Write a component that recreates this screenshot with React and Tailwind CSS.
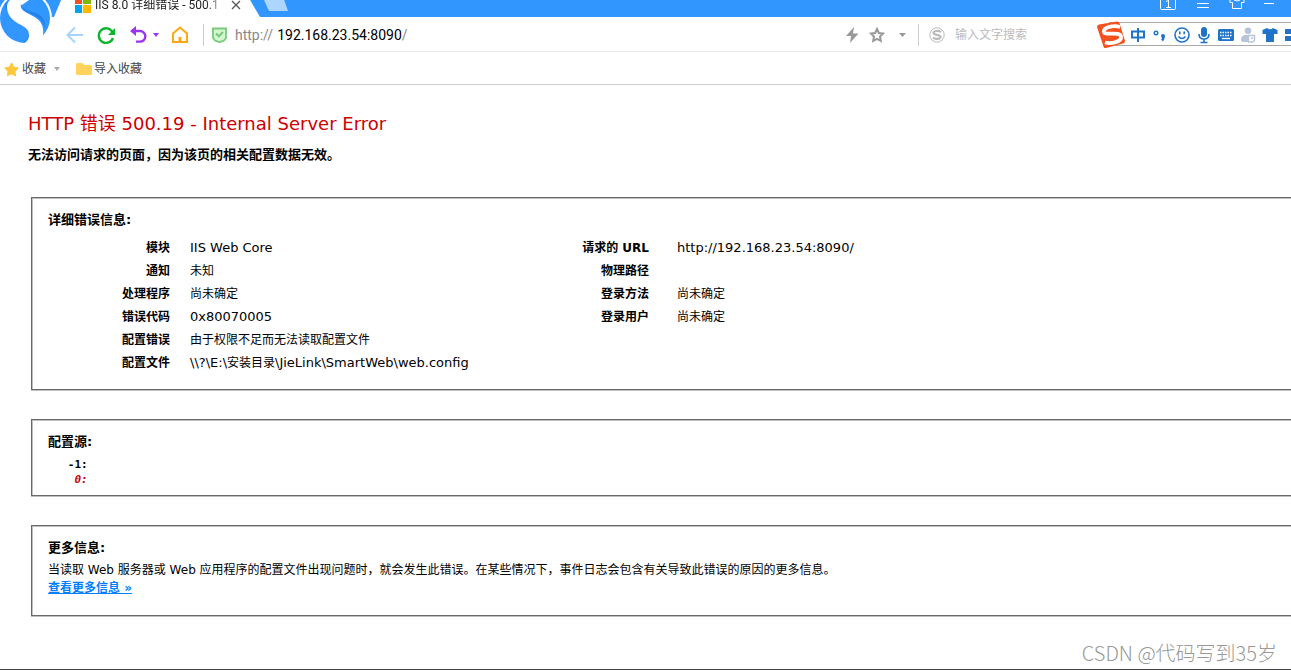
import { FaStar, FaFolder } from 'react-icons/fa'

const leftRows = [
  ['模块', 'IIS Web Core'],
  ['通知', <span className="text-xs">未知</span>],
  ['处理程序', <span className="text-xs">尚未确定</span>],
  ['错误代码', '0x80070005'],
  ['配置错误', <span className="text-xs">由于权限不足而无法读取配置文件</span>],
  ['配置文件', <>\\?\E:\<span className="text-xs">安装目录</span>\JieLink\SmartWeb\web.config</>],
]

const rightRows = [
  ['请求的 URL', 'http://192.168.23.54:8090/'],
  ['物理路径', ''],
  ['登录方法', <span className="text-xs">尚未确定</span>],
  ['登录用户', <span className="text-xs">尚未确定</span>],
]

function BrowserLogo() {
  return (
    <svg className="absolute left-0 top-0" width="54" height="46" viewBox="0 0 54 46" aria-hidden="true">
      <circle cx="25" cy="18" r="27" fill="#fff" />
      <circle cx="25" cy="18" r="25" fill="#3296ff" />
      <path d="M5 4C5 20 28 20 29 33c0 5-3 9-7 10 7-1 10-6 9-13C28 17 8 18 7 2Z" fill="#2283e8" />
      <path d="M22 7c4 9 20 6 23 21 1-13-8-15-17-17Z" fill="#2283e8" />
      <path
        d="M10 0H22C19 6 21 10 27 13c8 4 15 7 16 16 1 6-1 10-4 13l-5 4-12-2c4-1 7-4 7-9 0-6-4-8-10-11C12 20 7 15 7 7c0-3 1-5 3-7Z"
        fill="#fff"
      />
      <path d="M10 0h19l-7 5Z" fill="#fff" />
    </svg>
  )
}

function TabStrip() {
  return (
    <header className="flex h-[17px] items-end overflow-hidden bg-[#3296ff] pl-[54px] pr-3.5">
      <div className="flex h-6 w-[206px] shrink-0 items-center bg-white pl-[21px] text-xs text-[#222] [clip-path:polygon(10px_0,192px_0,206px_100%,0_100%)]">
        <svg width="16" height="16" viewBox="0 0 16 16" aria-hidden="true">
          <path d="M0 0h7v7H0z" fill="#f25022" />
          <path d="M8 0h8v7H8z" fill="#7fba00" />
          <path d="M0 8h7v8H0z" fill="#00a4ef" />
          <path d="M8 8h8v8H8z" fill="#ffb900" />
        </svg>
        <span className="ml-1 w-[132px] whitespace-nowrap font-['Roboto','Noto_Sans_CJK_SC',sans-serif] leading-4 [mask-image:linear-gradient(to_right,#000_84%,transparent)]">
          IIS 8.0 详细错误 - 500.1
        </span>
        <button type="button" aria-label="关闭标签" className="ml-1">
          <svg width="10" height="10" viewBox="0 0 10 10" stroke="#555" strokeWidth="1.3">
            <path d="M1 1l8 8M9 1L1 9" />
          </svg>
        </button>
      </div>
      <button type="button" aria-label="新标签" className="mb-1.5 h-5 w-7 bg-[#add6ff] [clip-path:polygon(0_0,21px_0,28px_100%,9px_100%)]" />
      <div className="ml-auto flex shrink-0 items-end gap-4 self-start text-white">
        <button type="button" aria-label="窗口数">
          <svg width="19" height="11" viewBox="0 0 19 11" fill="none" stroke="#fff">
            <path d="M1.5 0v8.500q0 1 1 1h13q1 0 1-1V0M9.500 0v7M7 7.500h5M7 1.500l2.500-1" />
          </svg>
        </button>
        <button type="button" aria-label="菜单">
          <svg width="19" height="11" viewBox="0 0 19 11" stroke="#fff">
            <path d="M3 3.500h12M3 7.500h12" />
          </svg>
        </button>
        <button type="button" aria-label="皮肤">
          <svg width="16" height="11" viewBox="0 0 16 11" fill="none" stroke="#fff">
            <path d="M1 0v2.500h2.500v6h9v-6H15V0M5 0q3 2 6 0" />
          </svg>
        </button>
        <button type="button" aria-label="最小化">
          <svg width="16" height="11" viewBox="0 0 16 11" stroke="#fff">
            <path d="M3 3.500h10" />
          </svg>
        </button>
      </div>
    </header>
  )
}

function NavBar() {
  return (
    <nav className="flex h-[35px] items-center border-b border-[#e8e8e8] bg-white pl-[66px] pt-px font-['Roboto','Noto_Sans_CJK_SC',sans-serif]">
      <button type="button" aria-label="后退">
        <svg width="18" height="18" viewBox="0 0 18 18" fill="none" stroke="#a9d3ff" strokeWidth="2">
          <path d="M17 9H2M9 1.500L1.500 9 9 16.500" />
        </svg>
      </button>
      <button type="button" aria-label="刷新" className="ml-3">
        <svg width="20" height="18" viewBox="0 0 20 18" fill="none" stroke="#0bb52c" strokeWidth="2.400">
          <path d="M16.500 6A7.300 7.300 0 1 0 17 12" />
          <path d="M19 2v7h-7z" fill="#0bb52c" stroke="none" />
        </svg>
      </button>
      <button type="button" aria-label="恢复" className="ml-3.5 flex items-center gap-1.5">
        <svg width="17" height="18" viewBox="0 0 17 18" fill="none" stroke="#9b35f5" strokeWidth="2.400">
          <path d="M3 5h7a5.300 5.300 0 0 1 0 10.600H6" />
          <path d="M0 5l6-5v10z" fill="#9b35f5" stroke="none" />
        </svg>
        <svg width="6" height="4" viewBox="0 0 6 4" fill="#9b35f5">
          <path d="M0 0h6L3 4z" />
        </svg>
      </button>
      <button type="button" aria-label="主页" className="ml-3">
        <svg width="18" height="18" viewBox="0 0 18 18" fill="none" stroke="#ffa812" strokeWidth="2">
          <path d="M2 7.500L9 1.500l7 6V16H2z" />
          <path d="M9 11v5" strokeWidth="3" />
        </svg>
      </button>
      <span className="ml-3.5 h-[22px] w-px bg-[#ccc]" />
      <svg className="ml-2 shrink-0" width="15" height="16" viewBox="0 0 15 16" fill="#d3f7cf" stroke="#78ca7c" strokeWidth="1.800">
        <path d="M1 1.500h13V11l-2 2.500-4.500 1.700L3 13.500 1 11z" />
        <path d="M4 6.500l2.800 2.800L11 5" fill="none" strokeWidth="2" />
      </svg>
      <label htmlFor="address" className="ml-2 pr-1 text-sm text-[#888]">http://</label>
      <input
        id="address"
        type="text"
        defaultValue="192.168.23.54:8090"
        className="text-sm text-black outline-none [field-sizing:content]"
      />
      <span className="text-sm text-[#888]">/</span>
      <div className="ml-auto flex w-[445px] shrink-0 items-center">
        <button type="button" aria-label="极速模式">
          <svg width="13" height="16" viewBox="0 0 13 16" fill="#999">
            <path d="M8 0L0 9h5l-1 7 8.500-9.500H7z" />
          </svg>
        </button>
        <button type="button" aria-label="收藏此页" className="ml-2.5">
          <svg width="16" height="16" viewBox="0 0 16 16" fill="none" stroke="#999" strokeWidth="2">
            <path d="M8 2l1.800 4 4.200.5-3 3 .8 4.300L8 11.800l-3.800 2 .8-4.300-3-3L6.200 6z" />
          </svg>
        </button>
        <button type="button" aria-label="更多" className="ml-3.5">
          <svg width="7" height="4" viewBox="0 0 7 4" fill="#999">
            <path d="M0 0h7L3.500 4z" />
          </svg>
        </button>
        <span className="ml-3 h-[22px] w-px bg-[#ccc]" />
        <svg className="ml-2.5 shrink-0" width="16" height="16" viewBox="0 0 16 16" fill="none" stroke="#bbb" aria-hidden="true">
          <circle cx="8" cy="8" r="7.200" />
          <path d="M12 5C10 3.500 4.500 3.500 4.500 6c0 2.300 7 1.500 7 4 0 2.300-5 2.300-7.500.8" strokeWidth="2.200" />
        </svg>
        <input
          type="search"
          aria-label="搜索"
          placeholder="输入文字搜索"
          className="ml-2.5 w-28 text-xs outline-none placeholder:text-[#bbb]"
        />
      </div>
    </nav>
  )
}

function BookmarkBar() {
  return (
    <div className="flex h-[33px] items-center border-b border-[#ccc] pl-1 pt-0.5 font-['Roboto','Noto_Sans_CJK_SC',sans-serif] text-xs text-[#444]">
      <button type="button" className="flex items-center">
        <FaStar size={15} color="#ffc83c" />
        <span className="ml-[3px]">收藏</span>
        <svg className="ml-2" width="6" height="4" viewBox="0 0 6 4" fill="#aaa">
          <path d="M0 0h6L3 4z" />
        </svg>
      </button>
      <button type="button" className="ml-4 flex items-center gap-0.5">
        <FaFolder size={16} color="#ffd35c" />
        <span>导入收藏</span>
      </button>
    </div>
  )
}

// Input method bar, floats over the right end of the browser window
function ImeBar() {
  return (
    <div className="absolute right-0 top-5 flex h-7 w-[194px] items-center overflow-hidden">
      <div className="ml-3 h-6 flex-1 border-y border-[#aaa] bg-white" />
      <div className="absolute inset-0 flex items-center pt-0.5 text-[#1f74c9]">
        <svg className="shrink-0" width="29" height="28" viewBox="0 0 29 28" aria-hidden="true">
          <path d="M2 3.500L20 .5q2 0 2.500 1.500L28 20q0 2-2 2.500L9 27q-2 .5-2.500-1.500L0 6q0-2 2-2.500z" fill="#f4511e" />
          <path d="M23 6C17 4 6 6 7 11c1 4 16-1 17 4.500C25 21 14 23 8 21.500" fill="none" stroke="#fff" strokeWidth="3.800" />
        </svg>
        <div className="ml-1 flex items-center gap-1.5">
          <button type="button" aria-label="中文">
            <svg width="16" height="16" viewBox="0 0 16 16" fill="none" stroke="currentColor" strokeWidth="2">
              <path d="M2 4.500h12v6H2zM8 1v14" />
            </svg>
          </button>
          <button type="button" aria-label="标点">
            <svg width="16" height="16" viewBox="0 0 16 16" fill="none" stroke="currentColor">
              <circle cx="4" cy="6" r="1.800" strokeWidth="1.400" />
              <path d="M11.500 9.500v.5q0 2-1.500 3.500" strokeWidth="2.600" />
              <circle cx="11" cy="9" r="2" fill="currentColor" stroke="none" />
            </svg>
          </button>
          <button type="button" aria-label="表情">
            <svg width="16" height="16" viewBox="0 0 16 16" fill="none" stroke="currentColor" strokeWidth="1.600">
              <circle cx="8" cy="8" r="7" />
              <path d="M5.800 4.500v2.800M10.200 4.500v2.800M4.500 9.500q3.500 4 7 0" />
            </svg>
          </button>
          <button type="button" aria-label="语音">
            <svg width="16" height="18" viewBox="0 0 16 18" fill="none" stroke="currentColor" strokeWidth="1.600">
              <rect x="5" y="1" width="6" height="10" rx="3" fill="currentColor" stroke="none" />
              <path d="M3 8q0 5 5 5t5-5M8 13v3.500M4.500 16.500h7" />
            </svg>
          </button>
          <button type="button" aria-label="软键盘">
            <svg width="16" height="14" viewBox="0 0 16 14">
              <rect y="1" width="16" height="12" rx="1.500" fill="currentColor" />
              <path d="M2 4.500h12M2 7.500h12" stroke="#fff" strokeWidth="1.500" strokeDasharray="1.500 1" />
              <path d="M4 10.500h8" stroke="#fff" strokeWidth="1.300" />
            </svg>
          </button>
          <button type="button" aria-label="账户">
            <svg width="16" height="16" viewBox="0 0 16 16" fill="#b7c3d8">
              <circle cx="8" cy="3.700" r="3.300" />
              <path d="M1 13q0-5 5-5h5q2 0 3 2v5H3q-2 0-2-2z" />
              <path d="M8.500 8.500h6v5l-2 1.500h-4z" fill="#fff" stroke="#b7c3d8" strokeWidth="1.400" />
              <path d="M11 10.500h2v1.500h-2z" />
            </svg>
          </button>
          <button type="button" aria-label="皮肤">
            <svg width="16" height="16" viewBox="0 0 16 16" fill="currentColor">
              <path d="M5 1q3 2.500 6 0l4.500 2v4L12 7v8H4V7L.5 7V3z" />
            </svg>
          </button>
          <button type="button" aria-label="工具箱">
            <svg width="16" height="14" viewBox="0 0 16 14" fill="currentColor">
              <path d="M1 1h6v5H1zM9 1h6v5H9zM1 8h6v5H1zM9 8h6v5H9z" />
            </svg>
          </button>
        </div>
      </div>
    </div>
  )
}

function Panel({ title, children }) {
  return (
    <section className="mb-[29px] ml-[31px] border-y border-l border-[#696969] pl-4 pt-2.5 shadow-[inset_1px_1px_0_#c0c0c0,0_1px_0_#c0c0c0]">
      <h3 className="text-[13px] font-bold leading-6">{title}</h3>
      {children}
    </section>
  )
}

function DetailTable({ rows, className, valueClass }) {
  return (
    <table className={className}>
      <tbody>
        {rows.map(([label, value]) => (
          <tr key={label} className="h-[23px] leading-5">
            <th scope="row" className="whitespace-nowrap p-0 text-right font-bold">{label}</th>
            <td className={valueClass}>{value}</td>
          </tr>
        ))}
      </tbody>
    </table>
  )
}

export default function App() {
  return (
    <div className="relative flex min-h-screen flex-col overflow-hidden border-b border-[#444] bg-white font-['DejaVu_Sans','Noto_Sans_CJK_SC',sans-serif] text-xs text-black">
      <TabStrip />
      <NavBar />
      <BookmarkBar />
      <BrowserLogo />
      <ImeBar />

      <main className="pt-[26px]">
        <h1 className="ml-7 text-lg leading-[26px] text-[#c00]">HTTP 错误 500.19 - Internal Server Error</h1>
        <h2 className="mb-8 ml-7 mt-2 text-[13px] font-bold leading-5">无法访问请求的页面，因为该页的相关配置数据无效。</h2>

        <Panel title="详细错误信息:">
          <div className="mt-1 flex items-start pb-[15px]">
            <DetailTable rows={leftRows} className="w-[486px]" valueClass="w-[364px] whitespace-nowrap p-0 pl-5 text-[13px]" />
            <DetailTable rows={rightRows} className="w-[487px]" valueClass="w-[372px] whitespace-nowrap p-0 pl-7 text-[13px]" />
          </div>
        </Panel>

        <Panel title="配置源:">
          <pre className="pb-2 pt-[3px] font-['DejaVu_Sans_Mono','Liberation_Mono',monospace] text-[11px] font-bold leading-[15px]">
            {'   -1: \n'}
            <i className="text-[#c00]">{'    0: '}</i>
          </pre>
        </Panel>

        <Panel title="更多信息:">
          <p className="pt-px leading-[18px]">
            当读取 Web 服务器或 Web 应用程序的配置文件出现问题时，就会发生此错误。在某些情况下，事件日志会包含有关导致此错误的原因的更多信息。
          </p>
          <p className="pb-[18px] leading-[18px]">
            <a href="#more" className="font-bold text-[#007eff] underline">查看更多信息 »</a>
          </p>
        </Panel>
      </main>

      <div className="absolute bottom-0.5 right-3.5 font-['Noto_Sans_CJK_SC',sans-serif] text-xl font-light text-[#999]">
        CSDN @代码写到35岁
      </div>
    </div>
  )
}
